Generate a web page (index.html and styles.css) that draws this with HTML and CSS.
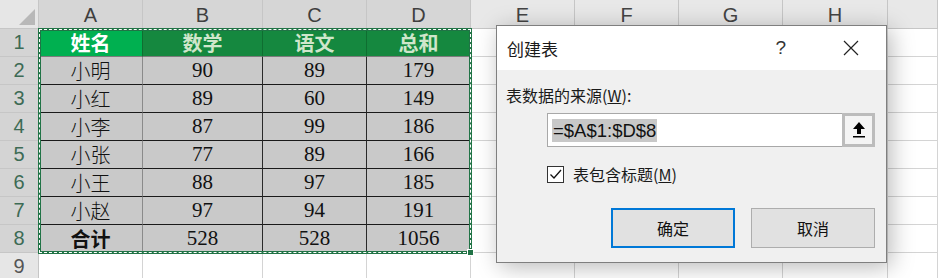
FILE: index.html
```html
<!DOCTYPE html>
<html lang="zh-CN">
<head>
  <meta charset="UTF-8" />
  <title>创建表</title>
  <link rel="stylesheet" href="styles.css">
</head>
<body>
  <div class="sheet">
    <div class="grid">
      <div class="corner"></div>
      <div class="col-head sel">A</div>
      <div class="col-head sel">B</div>
      <div class="col-head sel">C</div>
      <div class="col-head sel">D</div>
      <div class="col-head">E</div>
      <div class="col-head">F</div>
      <div class="col-head">G</div>
      <div class="col-head">H</div>
      <div class="col-head"></div>

      <div class="row-head sel">1</div>
      <div class="cell th active">姓名</div>
      <div class="cell th">数学</div>
      <div class="cell th">语文</div>
      <div class="cell th">总和</div>
      <div class="cell"></div><div class="cell"></div><div class="cell"></div><div class="cell"></div><div class="cell"></div>

      <div class="row-head sel">2</div>
      <div class="cell td cn">小明</div><div class="cell td">90</div><div class="cell td">89</div><div class="cell td">179</div>
      <div class="cell"></div><div class="cell"></div><div class="cell"></div><div class="cell"></div><div class="cell"></div>

      <div class="row-head sel">3</div>
      <div class="cell td cn">小红</div><div class="cell td">89</div><div class="cell td">60</div><div class="cell td">149</div>
      <div class="cell"></div><div class="cell"></div><div class="cell"></div><div class="cell"></div><div class="cell"></div>

      <div class="row-head sel">4</div>
      <div class="cell td cn">小李</div><div class="cell td">87</div><div class="cell td">99</div><div class="cell td">186</div>
      <div class="cell"></div><div class="cell"></div><div class="cell"></div><div class="cell"></div><div class="cell"></div>

      <div class="row-head sel">5</div>
      <div class="cell td cn">小张</div><div class="cell td">77</div><div class="cell td">89</div><div class="cell td">166</div>
      <div class="cell"></div><div class="cell"></div><div class="cell"></div><div class="cell"></div><div class="cell"></div>

      <div class="row-head sel">6</div>
      <div class="cell td cn">小王</div><div class="cell td">88</div><div class="cell td">97</div><div class="cell td">185</div>
      <div class="cell"></div><div class="cell"></div><div class="cell"></div><div class="cell"></div><div class="cell"></div>

      <div class="row-head sel">7</div>
      <div class="cell td cn">小赵</div><div class="cell td">97</div><div class="cell td">94</div><div class="cell td">191</div>
      <div class="cell"></div><div class="cell"></div><div class="cell"></div><div class="cell"></div><div class="cell"></div>

      <div class="row-head sel">8</div>
      <div class="cell td cn total">合计</div><div class="cell td">528</div><div class="cell td">528</div><div class="cell td">1056</div>
      <div class="cell"></div><div class="cell"></div><div class="cell"></div><div class="cell"></div><div class="cell"></div>

      <div class="row-head">9</div>
      <div class="cell"></div><div class="cell"></div><div class="cell"></div><div class="cell"></div>
      <div class="cell"></div><div class="cell"></div><div class="cell"></div><div class="cell"></div><div class="cell"></div>
    </div>

    <div class="marquee"><span class="handle"></span></div>

    <div class="dialog">
      <div class="dialog-title">
        <span class="title-text">创建表</span>
        <span class="help">?</span>
        <svg class="close" width="16" height="16" viewBox="0 0 16 16">
          <path d="M1 1 L15 15 M15 1 L1 15" stroke="#222" stroke-width="1.2" fill="none"/>
        </svg>
      </div>
      <div class="dialog-body">
        <div class="label">表数据的来源(<u>W</u>):</div>
        <div class="range-row">
          <div class="range-input"><span class="range-sel">=$A$1:$D$8</span></div>
          <div class="collapse-btn">
            <svg width="16" height="18" viewBox="0 0 16 18">
              <path d="M8 1 L14 8 L10 8 L10 13 L6 13 L6 8 L2 8 Z" fill="#000"/>
              <rect x="2" y="15" width="12" height="1.5" fill="#000"/>
            </svg>
          </div>
        </div>
        <label class="check-row">
          <span class="checkbox">
            <svg width="15" height="15" viewBox="0 0 15 15">
              <path d="M2.5 7.5 L6 11 L13 3" stroke="#111" stroke-width="1.3" fill="none"/>
            </svg>
          </span>
          <span>表包含标题(<u>M</u>)</span>
        </label>
        <div class="buttons">
          <button class="btn primary">确定</button>
          <button class="btn">取消</button>
        </div>
      </div>
    </div>
  </div>
</body>
</html>
```

FILE: styles.css
```css
body {
  margin: 0;
  background: #fff;
  overflow: hidden;
}

.sheet {
  position: relative;
  width: 938px;
  height: 278px;
  overflow: hidden;
}

.grid {
  display: grid;
  grid-template-columns: 39px 104px 120px 104px 104px 104px 104px 104px 105px 1fr;
  grid-template-rows: 29px repeat(9, 28px);
}

.grid > div {
  box-sizing: border-box;
  display: flex;
  align-items: center;
  justify-content: center;
}

.corner {
  position: relative;
  background: #e6e6e6;
  border-right: 1px solid #c6c6c6;
  border-bottom: 1px solid #c6c6c6;
}

.corner::after {
  content: "";
  position: absolute;
  right: 3px;
  bottom: 3px;
  border-left: 16px solid transparent;
  border-bottom: 16px solid #b8b8b8;
}

.col-head {
  background: #e8e8e8;
  border-right: 1px solid #c6c6c6;
  border-bottom: 1px solid #c6c6c6;
  font-family: "Liberation Sans", sans-serif;
  font-size: 20px;
  color: #444;
  padding-top: 3px;
}

.col-head.sel {
  background: #d6d6d6;
  color: #3f3f3f;
}

.row-head {
  background: #e6e6e6;
  border-right: 1px solid #c6c6c6;
  border-bottom: 1px solid #c6c6c6;
  font-family: "Liberation Sans", sans-serif;
  font-size: 20px;
  color: #555;
}

.row-head.sel {
  background: #d4d4d4;
  color: #3d6b55;
}

.cell {
  border-right: 1px solid #d4d4d4;
  border-bottom: 1px solid #d4d4d4;
}

.th {
  background: #15883f;
  color: #cfe6cb;
  font-family: "Noto Sans CJK SC", sans-serif;
  font-weight: 700;
  font-size: 20px;
  border-right-color: #0f6e31;
  border-bottom-color: #7c7c7c;
}

.th.active {
  background: #00b050;
  color: #fff;
}

.td {
  background: #c9c9c9;
  color: #111;
  font-family: "Liberation Serif", serif;
  font-size: 21px;
  border-right-color: #2a2a2a;
  border-bottom-color: #1a1a1a;
}

.td.cn {
  font-family: "Noto Sans CJK SC", sans-serif;
  font-weight: 300;
  font-size: 20px;
  border-right-color: #8a8a8a;
}

.td.total {
  font-weight: 700;
}

.marquee {
  position: absolute;
  left: 38px;
  top: 28px;
  width: 434px;
  height: 226px;
  box-sizing: border-box;
  border: 3px solid #217346;
}

.marquee::after {
  content: "";
  position: absolute;
  top: -2px;
  left: -2px;
  right: -2px;
  bottom: -2px;
  border: 1px dashed #fff;
}

.handle {
  position: absolute;
  right: -5px;
  bottom: -5px;
  width: 5px;
  height: 5px;
  background: #217346;
  border: 1px solid #fff;
  z-index: 1;
}

.dialog {
  position: absolute;
  left: 496px;
  top: 25px;
  width: 391px;
  height: 238px;
  box-sizing: border-box;
  background: #f0f0f0;
  border: 1px solid #7f7f7f;
  box-shadow: 4px 4px 22px rgba(0, 0, 0, 0.28);
  font-family: "Noto Sans CJK SC", "Liberation Sans", sans-serif;
  color: #1a1a1a;
}

.dialog-title {
  height: 44px;
  background: #fff;
  display: flex;
  align-items: center;
  padding: 0 0 0 10px;
}

.title-text {
  font-size: 17px;
  flex: 1;
}

.help {
  font-family: "Liberation Sans", sans-serif;
  font-size: 19px;
  color: #333;
  margin-right: 57px;
}

.close {
  margin-right: 27px;
}

.dialog-body {
  padding: 15px 11px 0 9px;
}

.label {
  font-size: 16px;
  line-height: 20px;
}

.range-row {
  display: flex;
  margin: 8px 0 0 41px;
  height: 34px;
}

.range-input {
  box-sizing: border-box;
  width: 296px;
  background: #fff;
  border: 1px solid #a8a8a8;
  border-right: none;
  display: flex;
  align-items: center;
  padding-left: 4px;
}

.range-sel {
  background: #c8c8c8;
  font-family: "Liberation Sans", sans-serif;
  font-size: 18.5px;
  line-height: 23px;
  padding: 0 1px;
  color: #111;
}

.collapse-btn {
  box-sizing: border-box;
  width: 33px;
  height: 34px;
  background: #f4f4f4;
  border: 3px solid #bcbcbc;
  display: flex;
  align-items: center;
  justify-content: center;
}

.check-row {
  display: flex;
  align-items: center;
  gap: 9px;
  margin: 17px 0 0 41px;
  font-size: 16px;
  line-height: 20px;
}

.checkbox {
  box-sizing: border-box;
  width: 17px;
  height: 17px;
  border: 1px solid #333;
  background: #fff;
  display: flex;
  align-items: center;
  justify-content: center;
}

.buttons {
  display: flex;
  justify-content: flex-end;
  gap: 16px;
  margin-top: 24px;
}

.btn {
  box-sizing: border-box;
  width: 124px;
  height: 40px;
  background: #e1e1e1;
  border: 1px solid #adadad;
  font-family: "Noto Sans CJK SC", sans-serif;
  font-size: 16px;
  color: #111;
  padding: 0;
}

.btn.primary {
  border: 2px solid #0078d7;
}
```
